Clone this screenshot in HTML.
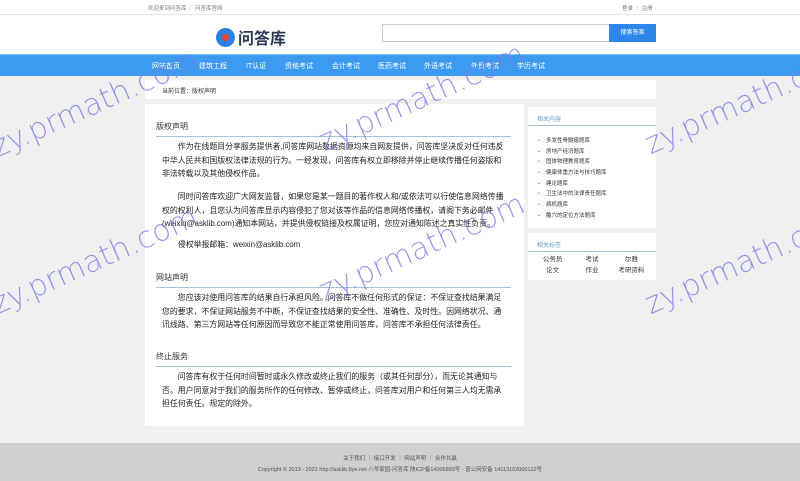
<!DOCTYPE html>
<html><head><meta charset="utf-8"><style>
*{margin:0;padding:0;box-sizing:border-box}
body{width:800px;height:481px;overflow:hidden;background:#f0f0f0;font-family:"Liberation Sans","Noto Sans CJK SC",sans-serif;color:#333;position:relative}
.top{height:15px;background:#fff;border-bottom:1px solid #e6e6e6;font-size:5.5px;color:#777;position:relative}
.top .l{position:absolute;left:148px;top:4px}
.top .r{position:absolute;left:622px;top:4px}
.hd{height:39px;background:#fff;position:relative}
.logo{position:absolute;left:216px;top:10px;display:flex;align-items:center}
.logo .ic{width:19px;height:19px;border-radius:50%;background:#2d7fe0;position:relative}
.logo .ic:after{content:"";position:absolute;left:6px;top:6px;width:7px;height:7px;border-radius:50%;background:#e6452e}
.logo span{font-size:16px;font-weight:bold;color:#2a3a55;margin-left:3px}
.search{position:absolute;left:382px;top:9px;width:228px;height:18px;border:1px solid #ccc;background:#fff}
.btn{position:absolute;left:609px;top:9px;width:47px;height:18px;background:#2f86ea;color:#fff;font-size:6px;text-align:center;line-height:18px}
.nav{height:22px;background:#3c9bf0;border-top:1px solid #7cc0f8;position:relative}
.nav span{position:absolute;top:6px;color:#fff;font-size:7px}
.crumb{position:absolute;left:145px;top:80px;width:511px;height:19px;background:#fff;font-size:6px;padding:6px 0 0 17px;color:#333}
.main{position:absolute;left:145px;top:104px;width:379px;height:322px;background:#fff}
.h{position:absolute;left:11px;width:355px;font-size:8px;border-bottom:1px solid #a9c3d6;padding-bottom:4px}
.p{position:absolute;left:11px;width:357px;font-size:7.9px;line-height:13.7px;text-indent:2em;padding:0 4px 0 6px;color:#222}
.side{position:absolute;left:528px;width:128px;background:#fff}
.sh{font-size:6px;color:#6a9bc9;padding:7px 0 0 9px;height:19px;border-bottom:1px solid #a9c3d6}
.side ul{list-style:none;padding:10px 0 0 10px}
.side li{font-size:5.5px;height:10.7px;color:#333}
.side li:before{content:"•";color:#3c8ed8;margin-right:6px}
.tags{display:grid;grid-template-columns:repeat(3,1fr);font-size:6.5px;text-align:center;padding:3px 5px 0;line-height:10.5px}
.ft{position:absolute;left:0;top:443px;width:800px;height:38px;background:#cfcfcf;font-size:5.5px;color:#555;text-align:center}
.wm{position:absolute;font-size:30px;line-height:30px;color:rgba(120,120,230,0.75);transform-origin:0 100%;transform:rotate(-24deg);white-space:nowrap;font-family:"DejaVu Sans","Liberation Sans",sans-serif;font-weight:200;pointer-events:none}
</style></head><body>
<div class="top"><span class="l">欢迎来到问答库 ｜ 问答库官网</span><span class="r">登录 ｜ 注册</span></div>
<div class="hd"><div class="logo"><div class="ic"></div><span>问答库</span></div><div class="search"></div><div class="btn">搜索答案</div></div>
<div class="nav">
<span style="left:152px">网站首页</span><span style="left:199px">建筑工程</span><span style="left:246px">IT认证</span><span style="left:285px">资格考试</span><span style="left:332px">会计考试</span><span style="left:378px">医药考试</span><span style="left:424px">外语考试</span><span style="left:471px">外贸考试</span><span style="left:517px">学历考试</span>
</div>
<div class="crumb">当前位置：版权声明</div>
<div class="main">
<div class="h" style="top:17px">版权声明</div>
<div class="p" style="top:36px">作为在线题目分享服务提供者,问答库网站数据资源均来自网友提供，问答库坚决反对任何违反中华人民共和国版权法律法规的行为。一经发现，问答库有权立即移除并停止继续传播任何盗版和非法转载以及其他侵权作品。</div>
<div class="p" style="top:86px">同时问答库欢迎广大网友监督，如果您是某一题目的著作权人和/或依法可以行使信息网络传播权的权利人，且您认为问答库显示内容侵犯了您对该等作品的信息网络传播权，请阁下务必邮件(weixin@asklib.com)通知本网站，并提供侵权链接及权属证明，您应对通知陈述之真实性负责。</div>
<div class="p" style="top:134px">侵权举报邮箱：weixin@asklib.com</div>
<div class="h" style="top:168px">网站声明</div>
<div class="p" style="top:187px">您应该对使用问答库的结果自行承担风险。问答库不做任何形式的保证：不保证查找结果满足您的要求，不保证网站服务不中断，不保证查找结果的安全性、准确性、及时性。因网络状况、通讯线路、第三方网站等任何原因而导致您不能正常使用问答库，问答库不承担任何法律责任。</div>
<div class="h" style="top:247px">终止服务</div>
<div class="p" style="top:266px">问答库有权于任何时间暂时或永久修改或终止我们的服务（或其任何部分），而无论其通知与否。用户同意对于我们的服务所作的任何修改、暂停或终止，问答库对用户和任何第三人均无需承担任何责任。规定的除外。</div>
</div>
<div class="side" style="top:107px;height:121px"><div class="sh">相关内容</div>
<ul><li>多发性骨髓瘤题库</li><li>房地产经济题库</li><li>固体物理教育题库</li><li>健康体重方法与技巧题库</li><li>建论题库</li><li>卫生法中的法律责任题库</li><li>病机题库</li><li>腧穴的定位方法题库</li></ul></div>
<div class="side" style="top:233px;height:47px"><div class="sh">相关标签</div>
<div class="tags"><span>公务员</span><span>考试</span><span>尔雅</span><span>论文</span><span>作业</span><span>考研资料</span></div></div>
<div class="ft"><div style="padding-top:11px">关于我们 ｜ 接口开发 ｜ 网站声明 ｜ 合作共赢</div><div style="padding-top:3px">Copyright © 2013 - 2021 http://asklib.8ye.net 八爷家园-问答库 陕ICP备14006899号 - 晋公网安备 14113102000122号</div></div>
<div class="wm" style="left:0;top:133px">zy.prmath.com</div>
<div class="wm" style="left:327px;top:127px">zy.prmath.com</div>
<div class="wm" style="left:653px;top:130px">zy.prmath.com</div>
<div class="wm" style="left:0;top:290px">zy.prmath.com</div>
<div class="wm" style="left:327px;top:277px">zy.prmath.com</div>
<div class="wm" style="left:653px;top:290px">zy.prmath.com</div>
<div class="wm" style="left:0;top:-27px">zy.prmath.com</div>
<div class="wm" style="left:327px;top:-30px">zy.prmath.com</div>
<div class="wm" style="left:653px;top:-27px">zy.prmath.com</div>
</body></html>
